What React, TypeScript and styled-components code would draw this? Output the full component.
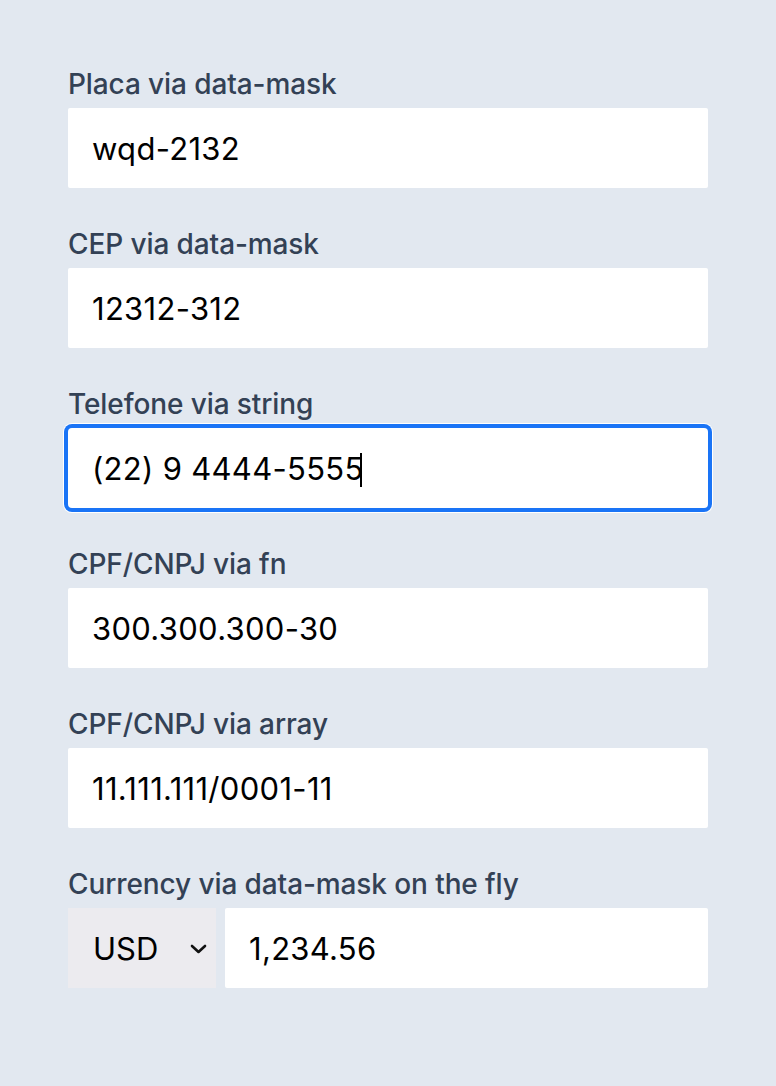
import React from "react";
import styled, { createGlobalStyle, css } from "styled-components";

const Global = createGlobalStyle`
  html, body { margin: 0; padding: 0; background: #e2e8f0; }
  body { font-family: Inter, "Noto Sans", "Liberation Sans", sans-serif; }
  * { box-sizing: border-box; }
`;

const Page = styled.main`
  min-height: 1086px;
  background: #e2e8f0;
  padding: 64px 68px 0;
`;

const Form = styled.form`
  width: 640px;
  display: flex;
  flex-direction: column;
  gap: 36px;
`;

const Field = styled.div`
  display: flex;
  flex-direction: column;
`;

const Label = styled.label`
  font-size: 28px;
  line-height: 44px;
  height: 44px;
  font-weight: 500;
  color: #334155;
  letter-spacing: -0.1px;
  padding-bottom: 4px;
  display: flex;
  align-items: center;
`;

const InputBox = styled.div`
  position: relative;
  flex: 1;
  min-width: 0;
`;

const Input = styled.input<{ $focused?: boolean }>`
  display: block;
  height: 80px;
  width: 100%;
  min-width: 0;
  border: none;
  border-radius: 2px;
  background: #ffffff;
  padding: 0 24px;
  font-family: Inter, "Noto Sans", "Liberation Sans", sans-serif;
  font-size: 31px;
  letter-spacing: 0.3px;
  color: #000;
  outline: none;
  caret-color: #000;
  ${(p) =>
    p.$focused &&
    css`
      box-shadow: 0 0 0 4px #1a74f6, 0 0 0 5px #ffffff;
      border-radius: 4px;
      caret-color: transparent;
    `}
`;

const Caret = styled.span<{ $left: number }>`
  position: absolute;
  left: ${(p) => p.$left}px;
  top: 25px;
  width: 2px;
  height: 34px;
  background: #000;
  pointer-events: none;
`;

const Row = styled.div`
  display: flex;
  gap: 9px;
`;

const SelectWrap = styled.div`
  position: relative;
  width: 148px;
  flex: none;
`;

const Select = styled.select`
  appearance: none;
  -webkit-appearance: none;
  display: block;
  width: 100%;
  height: 80px;
  border: none;
  background: #ecebef;
  padding: 0 25px;
  font-family: Inter, "Noto Sans", "Liberation Sans", sans-serif;
  font-size: 31px;
  color: #000;
  outline: none;
`;

const Chevron = styled.svg`
  position: absolute;
  right: 9px;
  top: 36px;
  width: 17px;
  height: 10px;
  pointer-events: none;
`;

const fields = [
  { label: "Placa via data-mask", value: "wqd-2132" },
  { label: "CEP via data-mask", value: "12312-312" },
  { label: "Telefone via string", value: "(22) 9 4444-5555", focused: true },
  { label: "CPF/CNPJ via fn", value: "300.300.300-30" },
  { label: "CPF/CNPJ via array", value: "11.111.111/0001-11" },
];

export default function App() {
  return (
    <>
      <Global />
      <Page>
        <Form onSubmit={(e) => e.preventDefault()}>
          {fields.map((f, i) => (
            <Field key={i}>
              <Label htmlFor={`f${i}`}>{f.label}</Label>
              <InputBox>
                <Input id={`f${i}`} defaultValue={f.value} $focused={f.focused} />
                {f.focused && <Caret $left={292} />}
              </InputBox>
            </Field>
          ))}
          <Field>
            <Label htmlFor="amount">Currency via data-mask on the fly</Label>
            <Row>
              <SelectWrap>
                <Select defaultValue="USD" aria-label="Currency">
                  <option value="USD">USD</option>
                  <option value="BRL">BRL</option>
                  <option value="EUR">EUR</option>
                </Select>
                <Chevron viewBox="0 0 17 10" fill="none">
                  <path
                    d="M2 2 L8.5 8 L15 2"
                    stroke="#111"
                    strokeWidth="2.6"
                    strokeLinecap="round"
                    strokeLinejoin="round"
                  />
                </Chevron>
              </SelectWrap>
              <InputBox>
                <Input id="amount" defaultValue="1,234.56" />
              </InputBox>
            </Row>
          </Field>
        </Form>
      </Page>
    </>
  );
}
